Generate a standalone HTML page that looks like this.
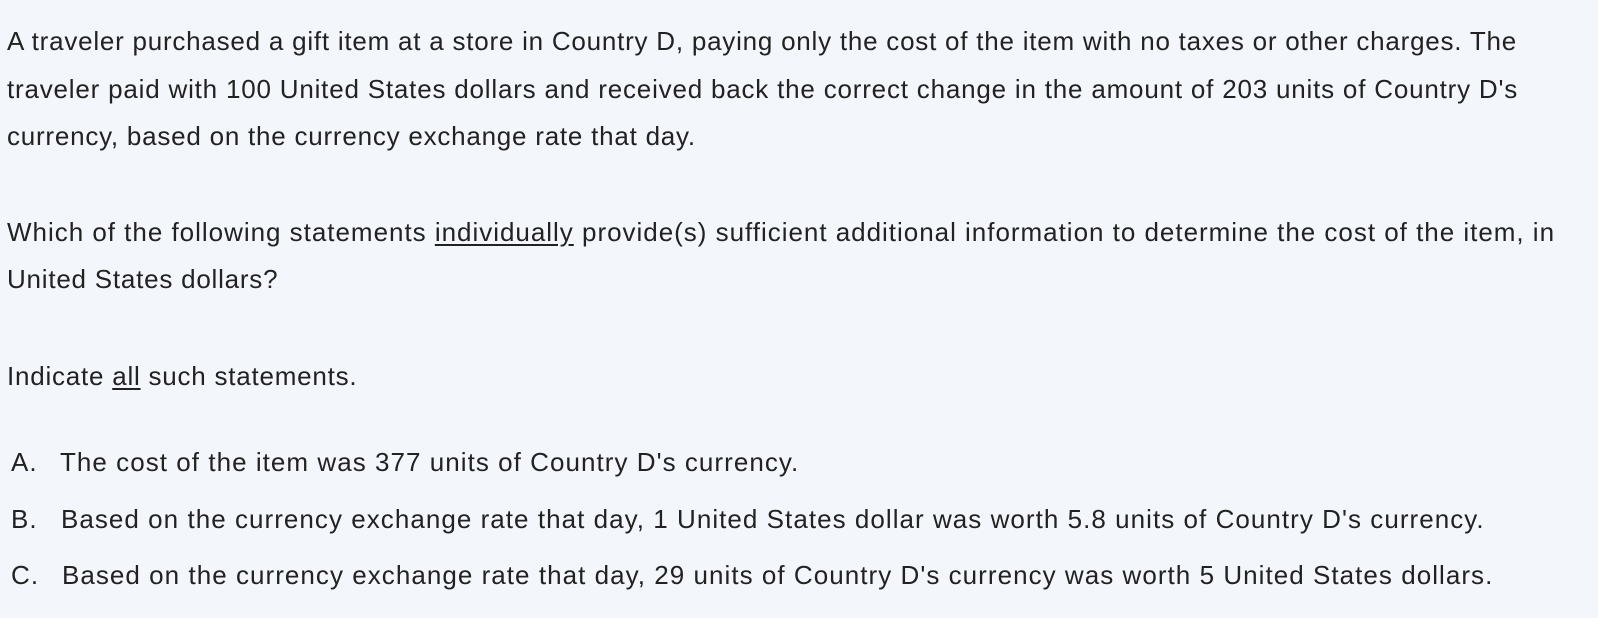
<!DOCTYPE html>
<html><head><style>
html,body{margin:0;padding:0;background:#f3f6fb;width:1598px;height:618px;overflow:hidden}
body{font-family:"Liberation Sans",Arial,sans-serif;font-size:26px;letter-spacing:0.77px;color:#222;}
.l{position:absolute;left:7px;white-space:nowrap;line-height:47px;height:47px}
.o{position:absolute;white-space:nowrap;line-height:47px;letter-spacing:1.04px}
u{text-underline-offset:3px}
</style></head><body>
<div class="l" style="top:18px">A traveler purchased a gift item at a store in Country D, paying only the cost of the item with no taxes or other charges. The</div>
<div class="l" style="top:66px;letter-spacing:0.8px">traveler paid with 100 United States dollars and received back the correct change in the amount of 203 units of Country D's</div>
<div class="l" style="top:113px">currency, based on the currency exchange rate that day.</div>
<div class="l" style="top:209px;letter-spacing:0.98px">Which of the following statements <u>individually</u> provide(s) sufficient additional information to determine the cost of the item, in</div>
<div class="l" style="top:256px">United States dollars?</div>
<div class="l" style="top:353px">Indicate <u>all</u> such statements.</div>
<div class="o" style="top:439px;left:11px">A.</div><div class="o" style="top:439px;left:60px">The cost of the item was 377 units of Country D's currency.</div>
<div class="o" style="top:496px;left:11px">B.</div><div class="o" style="top:496px;left:61px">Based on the currency exchange rate that day, 1 United States dollar was worth 5.8 units of Country D's currency.</div>
<div class="o" style="top:552px;left:11px">C.</div><div class="o" style="top:552px;left:62px">Based on the currency exchange rate that day, 29 units of Country D's currency was worth 5 United States dollars.</div>
</body></html>
